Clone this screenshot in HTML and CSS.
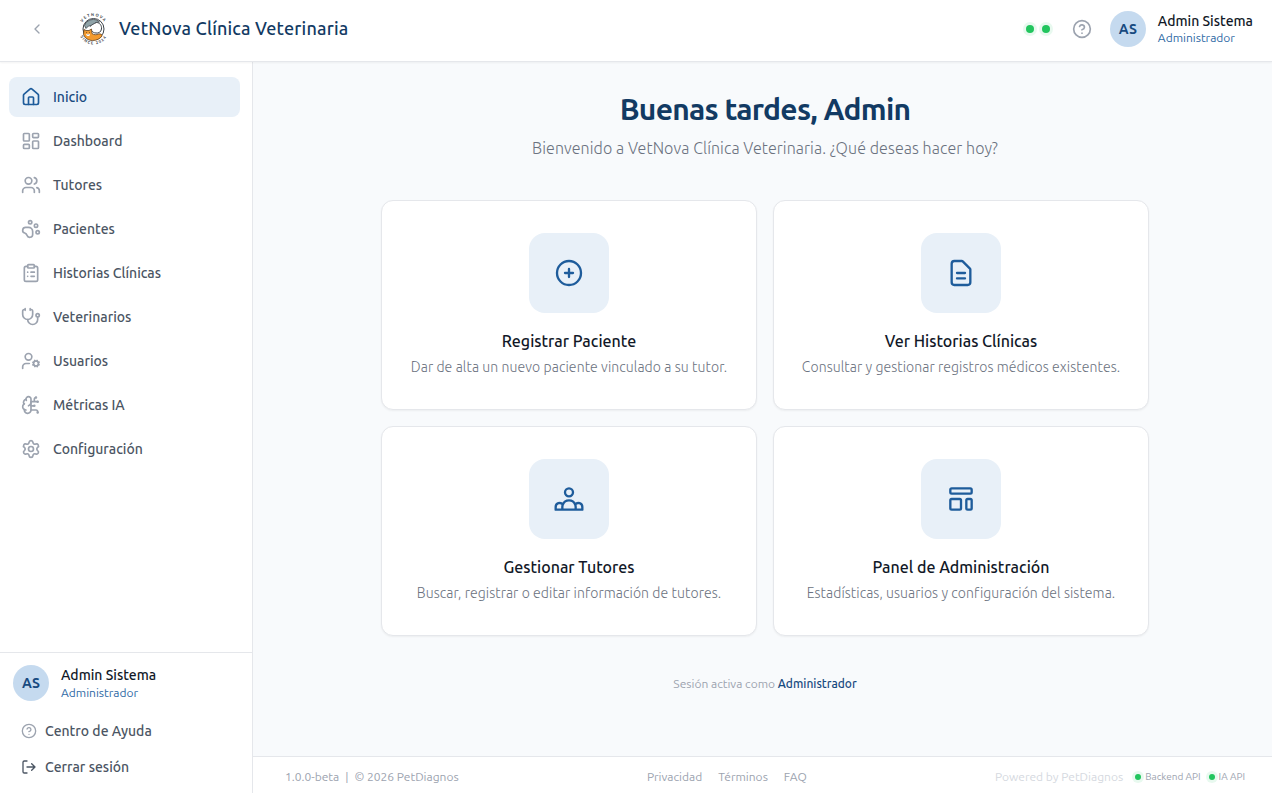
FILE: index.html
```
<!DOCTYPE html>
<html lang="es">
<head>
    <meta charset="UTF-8">
    <meta name="viewport" content="width=device-width, initial-scale=1.0">
    <title>VetNova Clínica Veterinaria</title>
    <link rel="stylesheet" href="styles.css">
</head>
<body>
    <header class="header">
        <button class="collapse-btn" aria-label="Contraer menú">
            <svg class="icon icon-sm" viewBox="0 0 24 24"><path d="m15 18-6-6 6-6"/></svg>
        </button>
        <div class="brand">
            <svg class="logo" viewBox="0 0 64 64">
                <defs>
                    <path id="arcTop" d="M8 31a25 25 0 0 1 50 0"/>
                    <path id="arcBottom" d="M3 33a30 30 0 0 0 60 0"/>
                </defs>
                <text class="logo-text"><textPath href="#arcTop" startOffset="50%">VETNOVA</textPath></text>
                <text class="logo-text"><textPath href="#arcBottom" startOffset="50%">SINCE 2024</textPath></text>
                <g transform="translate(1 0)">
                    <circle cx="32" cy="32" r="21" fill="#fff" stroke="#3b4248" stroke-width="2"/>
                    <path d="M14 25c3-8 10-12 18-12 5 0 9 2 12 5l-8 1-6 6-8 1-5 5z" fill="#8fa3a8" stroke="#3b4248" stroke-width="1.5"/>
                    <path d="M25 27c3-3 8-6 13-8 6 0 11 6 10 13-1 6-6 9-11 8-4 0-7-2-9-5" fill="#fff" stroke="#3b4248" stroke-width="2"/>
                    <path d="M13 33l4 2h6l5-3 1 9c4 3 9 3 13 1 4-1 8 1 7 4-4 6-11 9-19 9-9 0-15-5-18-12z" fill="#f29a2e" stroke="#5a3b1c" stroke-width="1.5"/>
                    <path d="M17 43c2-2 6-2 8 0-1 4-6 4-8 0z" fill="#fff"/>
                    <path d="M18 39h1M24 39h1M21 42v1" stroke="#3b2a18" stroke-width="2"/>
                </g>
            </svg>
            <span class="brand-name">VetNova Clínica Veterinaria</span>
        </div>
        <div class="header-right">
            <div class="status">
                <span class="dot"></span>
                <span class="dot"></span>
            </div>
            <svg class="icon help" viewBox="0 0 24 24"><circle cx="12" cy="12" r="10"/><path d="M9.09 9a3 3 0 0 1 5.83 1c0 2-3 3-3 3M12 17h.01"/></svg>
            <div class="user">
                <div class="avatar">AS</div>
                <div class="user-info">
                    <span class="user-name">Admin Sistema</span>
                    <span class="user-role">Administrador</span>
                </div>
            </div>
        </div>
    </header>

    <div class="layout">
        <aside class="sidebar">
            <nav class="nav">
                <a class="nav-item active">
                    <svg class="icon" viewBox="0 0 24 24"><path d="M15 21v-8a1 1 0 0 0-1-1h-4a1 1 0 0 0-1 1v8"/><path d="M3 10a2 2 0 0 1 .709-1.528l7-5.999a2 2 0 0 1 2.582 0l7 5.999A2 2 0 0 1 21 10v9a2 2 0 0 1-2 2H5a2 2 0 0 1-2-2z"/></svg>
                    Inicio
                </a>
                <a class="nav-item">
                    <svg class="icon" viewBox="0 0 24 24"><rect width="7" height="9" x="3" y="3" rx="1"/><rect width="7" height="5" x="14" y="3" rx="1"/><rect width="7" height="9" x="14" y="12" rx="1"/><rect width="7" height="5" x="3" y="16" rx="1"/></svg>
                    Dashboard
                </a>
                <a class="nav-item">
                    <svg class="icon" viewBox="0 0 24 24"><path d="M16 21v-2a4 4 0 0 0-4-4H6a4 4 0 0 0-4 4v2"/><circle cx="9" cy="7" r="4"/><path d="M22 21v-2a4 4 0 0 0-3-3.87M16 3.13a4 4 0 0 1 0 7.75"/></svg>
                    Tutores
                </a>
                <a class="nav-item">
                    <svg class="icon" viewBox="0 0 24 24"><circle cx="11" cy="4" r="2"/><circle cx="18" cy="8" r="2"/><circle cx="20" cy="16" r="2"/><path d="M9 10a5 5 0 0 1 5 5v3.5a3.5 3.5 0 0 1-6.84 1.045Q6.52 17.48 4.46 16.84A3.5 3.5 0 0 1 5.5 10Z"/></svg>
                    Pacientes
                </a>
                <a class="nav-item">
                    <svg class="icon" viewBox="0 0 24 24"><rect width="8" height="4" x="8" y="2" rx="1"/><path d="M16 4h2a2 2 0 0 1 2 2v14a2 2 0 0 1-2 2H6a2 2 0 0 1-2-2V6a2 2 0 0 1 2-2h2M12 11h4M12 16h4M8 11h.01M8 16h.01"/></svg>
                    Historias Clínicas
                </a>
                <a class="nav-item">
                    <svg class="icon" viewBox="0 0 24 24"><path d="M11 2v2M5 2v2M5 3H4a2 2 0 0 0-2 2v4a6 6 0 0 0 12 0V5a2 2 0 0 0-2-2h-1"/><path d="M8 15a6 6 0 0 0 12 0v-3"/><circle cx="20" cy="10" r="2"/></svg>
                    Veterinarios
                </a>
                <a class="nav-item">
                    <svg class="icon" viewBox="0 0 24 24"><circle cx="18" cy="15" r="3"/><circle cx="9" cy="7" r="4"/><path d="M10 15H6a4 4 0 0 0-4 4v2M21.7 16.4l-.9-.3M15.2 13.9l-.9-.3M16.6 18.7l.3-.9M19.1 12.2l.3-.9M19.6 18.7l-.4-1M16.8 12.3l-.4-1M14.3 16.6l1-.4M20.7 13.8l1-.4"/></svg>
                    Usuarios
                </a>
                <a class="nav-item">
                    <svg class="icon" viewBox="0 0 24 24"><path d="M12 5a3 3 0 1 0-5.997.125 4 4 0 0 0-2.526 5.77 4 4 0 0 0 .556 6.588A4 4 0 1 0 12 18Z"/><path d="M9 13a4.5 4.5 0 0 0 3-4M6.003 5.125A3 3 0 0 0 6.401 6.5M3.477 10.896a4 4 0 0 1 .585-.396M6 18a4 4 0 0 1-1.967-.516M12 13h4M12 18h6a2 2 0 0 1 2 2v1M12 8h8M16 8V5a2 2 0 0 1 2-2"/><circle cx="16" cy="13" r=".5"/><circle cx="18" cy="3" r=".5"/><circle cx="20" cy="21" r=".5"/><circle cx="20" cy="8" r=".5"/></svg>
                    Métricas IA
                </a>
                <a class="nav-item">
                    <svg class="icon" viewBox="0 0 24 24"><path d="M9.671 4.136a2.34 2.34 0 0 1 4.659 0 2.34 2.34 0 0 0 3.319 1.915 2.34 2.34 0 0 1 2.33 4.033 2.34 2.34 0 0 0 0 3.831 2.34 2.34 0 0 1-2.33 4.033 2.34 2.34 0 0 0-3.319 1.915 2.34 2.34 0 0 1-4.659 0 2.34 2.34 0 0 0-3.32-1.915 2.34 2.34 0 0 1-2.33-4.033 2.34 2.34 0 0 0 0-3.831A2.34 2.34 0 0 1 6.35 6.051a2.34 2.34 0 0 0 3.319-1.915"/><circle cx="12" cy="12" r="3"/></svg>
                    Configuración
                </a>
            </nav>
            <div class="sidebar-footer">
                <div class="user">
                    <div class="avatar">AS</div>
                    <div class="user-info">
                        <span class="user-name">Admin Sistema</span>
                        <span class="user-role">Administrador</span>
                    </div>
                </div>
                <a class="footer-link">
                    <svg class="icon icon-sm help" viewBox="0 0 24 24"><circle cx="12" cy="12" r="10"/><path d="M9.09 9a3 3 0 0 1 5.83 1c0 2-3 3-3 3M12 17h.01"/></svg>
                    Centro de Ayuda
                </a>
                <a class="footer-link">
                    <svg class="icon icon-sm" viewBox="0 0 24 24"><path d="M9 21H5a2 2 0 0 1-2-2V5a2 2 0 0 1 2-2h4M16 17l5-5-5-5M21 12H9"/></svg>
                    Cerrar sesión
                </a>
            </div>
        </aside>

        <div class="content">
            <main class="main">
                <h1 class="greeting">Buenas tardes, Admin</h1>
                <p class="subtitle">Bienvenido a VetNova Clínica Veterinaria. ¿Qué deseas hacer hoy?</p>
                <div class="cards">
                    <a class="card">
                        <div class="card-icon">
                            <svg viewBox="0 0 24 24"><path d="M12 9v3m0 0v3m0-3h3m-3 0H9m12 0a9 9 0 11-18 0 9 9 0 0118 0z"/></svg>
                        </div>
                        <h2 class="card-title">Registrar Paciente</h2>
                        <p class="card-text">Dar de alta un nuevo paciente vinculado a su tutor.</p>
                    </a>
                    <a class="card">
                        <div class="card-icon">
                            <svg viewBox="0 0 24 24"><path d="M9 12h6m-6 4h6m2 5H7a2 2 0 01-2-2V5a2 2 0 012-2h5.586a1 1 0 01.707.293l5.414 5.414a1 1 0 01.293.707V19a2 2 0 01-2 2z"/></svg>
                        </div>
                        <h2 class="card-title">Ver Historias Clínicas</h2>
                        <p class="card-text">Consultar y gestionar registros médicos existentes.</p>
                    </a>
                    <a class="card">
                        <div class="card-icon">
                            <svg viewBox="0 0 24 24"><path d="M17 20h5v-2a3 3 0 00-5.356-1.857M17 20H7m10 0v-2c0-.656-.126-1.283-.356-1.857M7 20H2v-2a3 3 0 015.356-1.857M7 20v-2c0-.656.126-1.283.356-1.857m0 0a5.002 5.002 0 019.288 0M15 7a3 3 0 11-6 0 3 3 0 016 0z"/></svg>
                        </div>
                        <h2 class="card-title">Gestionar Tutores</h2>
                        <p class="card-text">Buscar, registrar o editar información de tutores.</p>
                    </a>
                    <a class="card">
                        <div class="card-icon">
                            <svg viewBox="0 0 24 24"><path d="M4 5a1 1 0 011-1h14a1 1 0 011 1v2a1 1 0 01-1 1H5a1 1 0 01-1-1V5zM4 13a1 1 0 011-1h6a1 1 0 011 1v6a1 1 0 01-1 1H5a1 1 0 01-1-1v-6zM16 13a1 1 0 011-1h2a1 1 0 011 1v6a1 1 0 01-1 1h-2a1 1 0 01-1-1v-6z"/></svg>
                        </div>
                        <h2 class="card-title">Panel de Administración</h2>
                        <p class="card-text">Estadísticas, usuarios y configuración del sistema.</p>
                    </a>
                </div>
                <p class="session">Sesión activa como <strong>Administrador</strong></p>
            </main>

            <footer class="footer">
                <div class="footer-info">
                    <span>1.0.0-beta</span>
                    <span>|</span>
                    <span>© 2026 PetDiagnos</span>
                </div>
                <div class="footer-links">
                    <a>Privacidad</a>
                    <a>Términos</a>
                    <a>FAQ</a>
                </div>
                <div class="footer-status">
                    <span class="powered">Powered by PetDiagnos</span>
                    <span class="api"><span class="dot dot-sm"></span>Backend API</span>
                    <span class="api"><span class="dot dot-sm"></span>IA API</span>
                </div>
            </footer>
        </div>
    </div>
</body>
</html>
```
FILE: styles.css
```
* {
    margin: 0;
    padding: 0;
    box-sizing: border-box;
}

body {
    height: 100vh;
    display: flex;
    flex-direction: column;
    overflow: hidden;
    background: #f8fafc;
    color: #111827;
    font-family: Ubuntu, "Noto Sans", sans-serif;
    font-size: 14px;
    line-height: 20px;
}

.icon {
    width: 20px;
    height: 20px;
    flex-shrink: 0;
    fill: none;
    stroke: currentColor;
    stroke-width: 2;
    stroke-linecap: round;
    stroke-linejoin: round;
}

.icon-sm {
    width: 16px;
    height: 16px;
}

.help {
    color: #9ca3af;
}

/* Header */
.header {
    height: 62px;
    flex-shrink: 0;
    display: flex;
    align-items: center;
    padding: 0 19px 3px 21px;
    background: #fff;
    border-bottom: 1px solid #e5e7eb;
    box-shadow: 0 1px 2px rgba(0, 0, 0, 0.05);
    z-index: 1;
}

.collapse-btn {
    width: 32px;
    height: 32px;
    display: flex;
    align-items: center;
    justify-content: center;
    background: none;
    border: none;
    color: #9ca3af;
    cursor: pointer;
}

.brand {
    display: flex;
    align-items: center;
    gap: 10px;
    margin-left: 24px;
}

.logo {
    width: 32px;
    height: 32px;
    overflow: visible;
}

.logo-text {
    font-size: 8px;
    font-weight: 700;
    letter-spacing: 2.2px;
    fill: #3b4248;
    text-anchor: middle;
}

.brand-name {
    padding-bottom: 2px;
    font-size: 18px;
    font-weight: 500;
    line-height: 28px;
    letter-spacing: 0.01em;
    color: #123a63;
}

.header-right {
    display: flex;
    align-items: center;
    margin-left: auto;
}

.status {
    display: flex;
    gap: 8px;
    margin-right: 22px;
}

.dot {
    width: 8px;
    height: 8px;
    border-radius: 50%;
    background: #22c55e;
    box-shadow: 0 0 0 3px rgba(34, 197, 94, 0.1);
}

.dot-sm {
    width: 6px;
    height: 6px;
}

.header-right .user {
    margin-left: 18px;
}

.user {
    display: flex;
    align-items: center;
    gap: 12px;
}

.avatar {
    width: 36px;
    height: 36px;
    display: flex;
    align-items: center;
    justify-content: center;
    border-radius: 50%;
    background: #c5daef;
    color: #184a80;
    font-weight: 600;
}

.user-info {
    display: flex;
    flex-direction: column;
}

.user-name {
    font-weight: 500;
    line-height: 18px;
}

.user-role {
    font-size: 12px;
    line-height: 16px;
    color: #2f6aa5;
}

/* Sidebar */
.layout {
    flex: 1;
    display: flex;
    min-height: 0;
}

.sidebar {
    width: 253px;
    flex-shrink: 0;
    display: flex;
    flex-direction: column;
    background: #fff;
    border-right: 1px solid #e5e7eb;
}

.nav {
    flex: 1;
    display: flex;
    flex-direction: column;
    gap: 4px;
    padding: 15px 12px 0 9px;
}

.nav-item {
    height: 40px;
    display: flex;
    align-items: center;
    gap: 12px;
    padding: 0 12px;
    border-radius: 8px;
    color: #4b5563;
    font-weight: 500;
}

.nav-item .icon {
    color: #9ca3af;
}

.nav-item.active {
    background: #e8f0f8;
    color: #184a80;
}

.nav-item.active .icon {
    color: #1e5c9b;
}

.sidebar-footer {
    padding: 12px 13px 8px;
    border-top: 1px solid #e5e7eb;
}

.sidebar-footer .user {
    margin-bottom: 12px;
}

.sidebar-footer .user-name {
    line-height: 20px;
}

.footer-link {
    height: 36px;
    display: flex;
    align-items: center;
    gap: 8px;
    padding: 0 8px;
    color: #4b5563;
    font-weight: 500;
}

/* Main */
.content {
    flex: 1;
    display: flex;
    flex-direction: column;
}

.main {
    flex: 1;
    display: flex;
    flex-direction: column;
    align-items: center;
    padding: 29px 0 0 5px;
}

.greeting {
    font-size: 30px;
    font-weight: 700;
    line-height: 36px;
    letter-spacing: -0.024em;
    color: #123a63;
}

.subtitle {
    margin: 9px 0 40px;
    font-size: 16px;
    font-weight: 300;
    line-height: 24px;
    letter-spacing: 0.09px;
    color: #6b7280;
}

.cards {
    width: 768px;
    display: grid;
    grid-template-columns: 1fr 1fr;
    gap: 16px;
}

.card {
    display: flex;
    flex-direction: column;
    align-items: center;
    padding: 32px 16px;
    background: #fff;
    border: 1px solid #e5e7eb;
    border-radius: 12px;
    box-shadow: 0 1px 2px rgba(0, 0, 0, 0.05);
}

.card-icon {
    width: 80px;
    height: 80px;
    display: flex;
    align-items: center;
    justify-content: center;
    margin-bottom: 16px;
    border-radius: 16px;
    background: #e8f0f8;
}

.card-icon svg {
    width: 32px;
    height: 32px;
    fill: none;
    stroke: #1e5c9b;
    stroke-width: 1.75;
    stroke-linecap: round;
    stroke-linejoin: round;
}

.card-title {
    margin-bottom: 4px;
    font-size: 16px;
    font-weight: 500;
    line-height: 24px;
}

.card-text {
    font-weight: 300;
    letter-spacing: 0.08px;
    color: #6b7280;
}

.session {
    margin-top: 40px;
    font-size: 12px;
    line-height: 16px;
    color: #9ca3af;
}

.session strong {
    font-weight: 500;
    color: #184a80;
}

/* Footer */
.footer {
    height: 37px;
    display: flex;
    align-items: center;
    justify-content: space-between;
    padding: 4px 27px 0 32px;
    background: #fff;
    border-top: 1px solid #e5e7eb;
    font-size: 12px;
    line-height: 16px;
    color: #9ca3af;
}

.footer-info {
    display: flex;
    gap: 6px;
}

.footer-links {
    display: flex;
    gap: 16px;
}

.footer-status {
    display: flex;
    align-items: center;
    gap: 8px;
}

.powered {
    margin-right: 4px;
    color: #d5d9e0;
}

.api {
    display: flex;
    align-items: center;
    gap: 4px;
    font-size: 10px;
}
```
